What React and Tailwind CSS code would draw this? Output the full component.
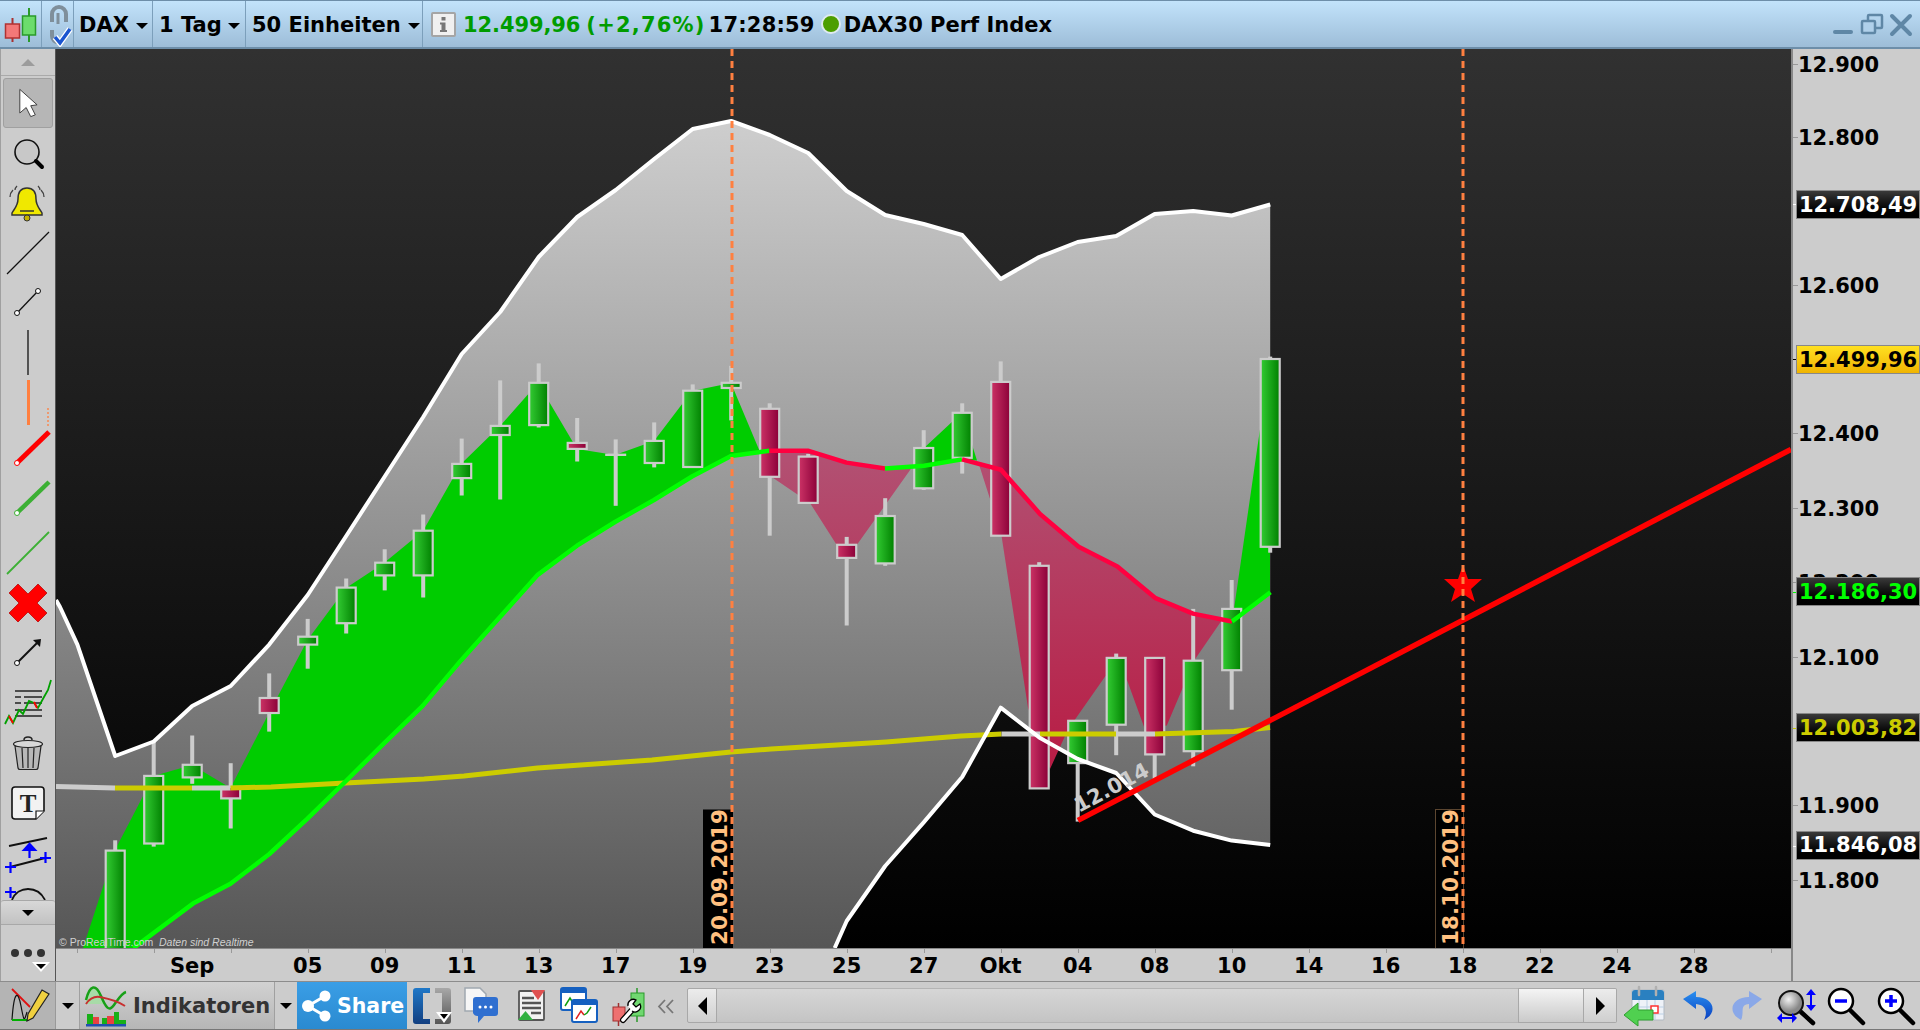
import React from "react";

const X = (i) => 115.2 + 38.5 * i;
const pts = (a) => a.map((p) => p.join(",")).join(" ");

const upperY = [756,741.5,706,686,644.6,595,536,476.5,417,354,312,257,217,190,159,129,121,135,153,191,215,224,235,279,257,242,236,214,211,215.5,204.5];
const upper = [[56,600],[60,607],[77.4,644.6],...upperY.map((y,i)=>[X(i),y])];
const lowerY = {30:845,29:840.6,28:830.7,27:814.5,26:773,25:759,24:737.4,23:707.7,22:777,21:822.4,20:866,19:921};
const lower = Object.keys(lowerY).map(Number).sort((a,b)=>a-b).map((i)=>[X(i),lowerY[i]]);
const lowerFull = [[834.7,948],...lower];

const emaGreen1 = [[133.5,948],[193,903.6],[230.5,883.8],[269.4,854],[307.5,818.6],[346,781],[384,743.4],[422.7,705.9],[461,660.4],[500,617],[538,574.6],[577,545.7],[615,522],[654,500],[692,476.5],[731,456],[769.4,450.8]];
const emaRed1 = [[769.4,450.8],[807.8,450.7],[846.5,462.6],[885,468.5]];
const emaGreen2 = [[885,468.5],[924,465.7],[962,459.4]];
const emaRed2 = [[962,459.4],[1001,469.7],[1040,514],[1078.6,546.8],[1117.4,566.6],[1155,597.8],[1193,613.6],[1232,621.5]];
const emaGreen3 = [[1232,621.5],[1270.4,592.3]];

const cloudGreen1 = [[83,948],[115,850],[153.5,776],[192,765],[230.5,788],[269,713],[307.5,640],[346,588],[384,563],[423,531],[461,464],[500,426],[538,383],[577,449],[615,455],[654,441],[692,391],[731,383],[760,452],...[...emaGreen1].reverse()];
const cloudRed1 = [[769.4,450.8],[807.8,450.7],[846.5,462.6],[885,468.5],[912.6,466.5],[856.4,545.6],[836.6,544.8],[810,503],[771,476.4]];
const cloudGreen2 = [[912.6,466.5],[924,448],[953,421],[962,413],[977,460.6],[962,459.4],[924,465.7]];
const cloudRed2 = [[979,464.6],[1001,469.7],[1040,514],[1078.6,546.8],[1117.4,566.6],[1155,597.8],[1193,613.6],[1222,620],[1194.5,660],[1166.8,725.5],[1145,729.5],[1127,680],[1105.5,676],[1068,729.5],[1050,769],[1028,707.7],[1001.5,535.7],[991,502]];
const cloudGreen3 = [[1232,621.5],[1234,609],[1270,360],[1270,592.3]];

// [index, wickTop, bodyTop, bodyBottom, wickBottom, colour]
const candles = [
  [0,840.3,850.6,960,960,"g"],[1,741.5,775.9,843.5,846.6,"g"],[2,735.5,764.8,777.4,783.8,"g"],[3,763.2,786.9,798.4,828.5,"r"],
  [4,673.4,698,713,731.6,"r"],[5,618.9,636.7,644.6,668.7,"g"],[6,578.5,587.6,623.2,633.5,"g"],[7,549.3,562.7,575.4,590.4,"g"],
  [8,514.5,530.7,575.4,597.5,"g"],[9,438.6,463.9,478.1,495.5,"g"],[10,380.4,425.9,435,499.5,"g"],[11,363.4,382.8,425.1,427.5,"g"],
  [12,418,442.9,448.9,461.5,"r"],[13,439.4,453.6,456,505.8,"d"],[14,422.4,440.9,463,467.4,"g"],[15,384.4,390.7,467,467,"g"],
  [16,365.8,382.8,388,420.4,"g"],[17,403.3,408.8,476.8,535.7,"r"],[18,453.9,456.6,502.9,502.9,"r"],[19,536.9,544.8,557.9,625.5,"r"],
  [20,498.2,516,563.4,565.8,"g"],[21,430.2,448,488.3,489.9,"g"],[22,403.3,412.8,457.8,473.6,"g"],[23,361.4,381.9,535.7,535.7,"r"],
  [24,562.2,565.8,788.4,788.4,"r"],[25,720.8,720.8,763.1,821.6,"g"],[26,653.6,657.9,724.7,755.2,"g"],[27,657.9,657.9,754.4,778.9,"r"],
  [28,608.9,660.7,751.2,766.3,"g"],[29,580,608.9,670.2,709.7,"g"],[30,356.6,359,546.8,552.7,"g"],
];

const Line = ({ p, c, w = 4 }) => (
  <polyline points={pts(p)} fill="none" stroke={c} strokeWidth={w} strokeLinejoin="round" strokeLinecap="butt" />
);

function Chart() {
  return (
    <svg width="1735" height="899" viewBox="56 49 1735 899" className="block">
      <defs>
        <linearGradient id="bg" x1="0" y1="49" x2="0" y2="948" gradientUnits="userSpaceOnUse">
          <stop offset="0" stopColor="#313131" /><stop offset="1" stopColor="#000000" />
        </linearGradient>
        <linearGradient id="band" x1="0" y1="120" x2="0" y2="948" gradientUnits="userSpaceOnUse">
          <stop offset="0" stopColor="#cecece" /><stop offset="1" stopColor="#565656" />
        </linearGradient>
        <linearGradient id="rcloud" x1="0" y1="460" x2="0" y2="770" gradientUnits="userSpaceOnUse">
          <stop offset="0" stopColor="#b25072" /><stop offset="1" stopColor="#b81c44" />
        </linearGradient>
        <linearGradient id="gbody"><stop offset="0" stopColor="#33cc33" /><stop offset="1" stopColor="#008000" /></linearGradient>
        <linearGradient id="rbody"><stop offset="0" stopColor="#cc3366" /><stop offset="1" stopColor="#8b0038" /></linearGradient>
      </defs>
      <rect x="56" y="49" width="1735" height="899" fill="url(#bg)" />
      <polygon points={pts([...upper, ...[...lowerFull].reverse(), [56, 948]])} fill="url(#band)" />
      <polygon points={pts(cloudGreen1)} fill="#00cc00" />
      <polygon points={pts(cloudGreen2)} fill="#00cc00" />
      <polygon points={pts(cloudGreen3)} fill="#00cc00" />
      <polygon points={pts(cloudRed1)} fill="url(#rcloud)" />
      <polygon points={pts(cloudRed2)} fill="url(#rcloud)" />
      {candles.map(([i, wt, bt, bb, wb, c]) => (
        <g key={i}>
          <rect x={X(i) - 2} y={wt} width="4" height={wb - wt} fill="#cccccc" />
          {c === "d" ? (
            <rect x={X(i) - 10.5} y={bt} width="21" height={bb - bt} fill="#cccccc" />
          ) : (
            <rect x={X(i) - 9.5} y={bt} width="19" height={bb - bt} fill={c === "g" ? "url(#gbody)" : "url(#rbody)"} stroke="#cccccc" strokeWidth="2.2" />
          )}
        </g>
      ))}
      <Line p={[[56,786.5],[115,788]]} c="#cccccc" w="5" />
      <Line p={[[115,788],[192,788]]} c="#cccc00" w="5" />
      <Line p={[[192,788],[230.5,788]]} c="#cccccc" w="5" />
      <Line p={[[230.5,788],[271,787],[345,783],[424,779],[464,776],[537.5,768],[652,760],[731,752],[771,749],[886,742],[961,736],[1001.5,734]]} c="#cccc00" w="5" />
      <Line p={[[1001.5,734],[1040,734]]} c="#cccccc" w="5" />
      <Line p={[[1040,734],[1116,734]]} c="#cccc00" w="5" />
      <Line p={[[1116,734],[1155,734]]} c="#cccccc" w="5" />
      <Line p={[[1155,734],[1234,731.5],[1270,727.5]]} c="#cccc00" w="5" />
      <Line p={emaGreen1} c="#00ff00" w="4.5" />
      <Line p={emaRed1} c="#ff0040" w="4.5" />
      <Line p={emaGreen2} c="#00ff00" w="4.5" />
      <Line p={emaRed2} c="#ff0040" w="4.5" />
      <Line p={emaGreen3} c="#00ff00" w="4.5" />
      <Line p={upper} c="#ffffff" />
      <Line p={lowerFull} c="#ffffff" />
      <text x="0" y="0" transform="translate(1079 813) rotate(-28)" fontSize="21" fontWeight="700" fill="#cccccc" fontFamily="'DejaVu Sans',sans-serif">12.014</text>
      <Line p={[[1078,820.4],[1791,449.4]]} c="#ff0000" w="5.5" />
      <polygon points="1463,565 1468,579 1482,579 1471,589 1475,602 1463,594 1451,602 1455,589 1444,579 1458,579" fill="#ff0000" />
      <rect x="703" y="809.5" width="30" height="139" fill="#000000" />
      <rect x="1435.5" y="809.5" width="28" height="139" fill="#000000" stroke="#5c4630" strokeWidth="1" />
      <text transform="translate(726.5 945) rotate(-90)" fontSize="21.5" fontWeight="700" fill="#ffc080" fontFamily="'DejaVu Sans',sans-serif">20.09.2019</text>
      <text transform="translate(1458 945) rotate(-90)" fontSize="21.5" fontWeight="700" fill="#ffc080" fontFamily="'DejaVu Sans',sans-serif">18.10.2019</text>
      <line x1="732" y1="49" x2="732" y2="948" stroke="#ff8040" strokeWidth="3" strokeDasharray="7 5" />
      <line x1="1463" y1="49" x2="1463" y2="948" stroke="#ff8040" strokeWidth="3" strokeDasharray="7 5" />
      <text x="59" y="946" fontSize="10.5" fill="#d0d0d0" fontFamily="'Liberation Sans',sans-serif">© ProRealTime.com</text>
      <text x="159" y="946" fontSize="10.5" fontStyle="italic" fill="#d0d0d0" fontFamily="'Liberation Sans',sans-serif">Daten sind Realtime</text>
    </svg>
  );
}

const Caret = ({ c = "border-t-black" }) => (
  <span className={`inline-block w-0 h-0 border-l-[6px] border-r-[6px] border-t-[6px] border-l-transparent border-r-transparent ${c}`} />
);

function TopBar() {
  return (
    <div className="flex h-[49px] shrink-0 items-stretch border-t border-b-2 border-[#6d8ea9] bg-gradient-to-b from-[#c2e3fb] to-[#9dbdd8] text-[21px] font-bold text-black">
      <div className="w-[42px] border-r border-[#7c9fbb]">
        <svg width="41" height="46" viewBox="0 1 41 46">
          <line x1="12.5" y1="18" x2="12.5" y2="42" stroke="#a83030" strokeWidth="2" />
          <rect x="5.5" y="24" width="14" height="14" fill="#f37878" stroke="#b03232" strokeWidth="1.5" />
          <line x1="29" y1="8" x2="29" y2="42" stroke="#2a9a2a" strokeWidth="2" />
          <rect x="22.5" y="16" width="13" height="19" fill="#6cdc6c" stroke="#2a9a2a" strokeWidth="1.5" />
        </svg>
      </div>
      <div className="w-[32px] border-r border-[#7c9fbb]">
        <svg width="31" height="46" viewBox="42 1 31 46">
          <path d="M52 22V14a7 7 0 0 1 14 0v8" fill="none" stroke="#7f8f9b" strokeWidth="4" />
          <path d="M58 24V13" stroke="#7f8f9b" strokeWidth="3" />
          <path d="M52 30v6a6 6 0 0 0 7 6" fill="none" stroke="#7f8f9b" strokeWidth="4" />
          <path d="M55 37l5 6 10-14" fill="none" stroke="#ffffff" strokeWidth="6" />
          <path d="M55 37l5 6 10-14" fill="none" stroke="#1a55d0" strokeWidth="3.5" />
        </svg>
      </div>
      <div className="flex w-[79px] items-center gap-[7px] border-r border-[#7c9fbb] pl-[5px] pt-[4px]">DAX<Caret /></div>
      <div className="flex w-[93px] items-center gap-[6px] border-r border-[#7c9fbb] pl-[6px] pt-[4px]">1 Tag<Caret /></div>
      <div className="flex w-[177px] items-center gap-[7px] border-r border-[#7c9fbb] pl-[6px] pt-[4px]">50 Einheiten<Caret /></div>
      <div className="flex flex-1 items-center pl-[8px]">
        <svg width="25" height="25" viewBox="0 0 25 25" className="mr-[7px]">
          <rect x="1" y="1" width="23" height="23" rx="1" fill="#f0f0f0" stroke="#a5a5a5" strokeWidth="2" />
          <rect x="10.5" y="5" width="4" height="3.5" fill="#777777" />
          <path d="M9 10.5h5.5V18H16v2H9v-2h1.5v-5.5H9z" fill="#777777" />
        </svg>
        <span className="pt-[4px] text-[#009c00] tracking-[-0.1px]">12.499,96</span>
        <span className="ml-[6px] pt-[4px] text-[#009c00] tracking-[1.2px]">(+2,76%)</span>
        <span className="ml-[3px] pt-[4px] tracking-[0.2px]">17:28:59</span>
        <span className="ml-[6px] h-[20px] w-[20px] rounded-full border-2 border-[#dfeaf0] bg-[#4d9e00]" />
        <span className="ml-[3px] pt-[4px]">DAX30 Perf Index</span>
        <span className="flex-1" />
        <svg width="90" height="46" viewBox="1830 1 90 46">
          <rect x="1833" y="30" width="20" height="4" rx="2" fill="#5f87a6" />
          <rect x="1868" y="15" width="14" height="13" rx="1" fill="none" stroke="#5f87a6" strokeWidth="2.5" />
          <rect x="1862" y="21" width="13" height="12" rx="1" fill="#b0d0ea" stroke="#5f87a6" strokeWidth="2.5" />
          <path d="M1892 16l18 18M1910 16l-18 18" stroke="#5f87a6" strokeWidth="4" strokeLinecap="round" />
        </svg>
      </div>
    </div>
  );
}

const Tool = ({ top, h, children }) => (
  <svg width="54" height={h} viewBox={`1 ${top} 54 ${h}`} className="block shrink-0">{children}</svg>
);

function LeftBar() {
  return (
    <div className="flex h-full w-[56px] shrink-0 flex-col border-l border-r border-l-[#a0a0a0] border-r-[#555555] bg-[#cccccc]">
      <div className="flex h-[27px] shrink-0 items-center justify-center border-b border-[#aaaaaa]">
        <span className="h-0 w-0 border-l-[7px] border-r-[7px] border-b-[7px] border-l-transparent border-r-transparent border-b-[#9c9c9c]" />
      </div>
      <div className="mx-[2px] mt-[2px] flex h-[50px] shrink-0 items-center justify-center rounded-[3px] border border-[#a0a0a0] bg-[#b6b6b6]">
        <svg width="20" height="32" viewBox="18 86 22 34">
          <path d="M20 88v26l7-6 5 10 5-2-5-10 7-1z" fill="#ffffff" stroke="#333333" strokeWidth="1" />
        </svg>
      </div>
      <div className="min-h-0 flex-1 overflow-hidden">
        <Tool top={128} h={46}>
          <circle cx="27" cy="152" r="12" fill="#c8c8c8" stroke="#111111" strokeWidth="1.6" />
          <line x1="36" y1="161" x2="42" y2="167" stroke="#000000" strokeWidth="4" strokeLinecap="round" />
        </Tool>
        <Tool top={174} h={52}>
          <g transform="translate(0 4)">
            <path d="M27 184c-7 0-9 5-9 11 0 7-4 10-6 14v2h30v-2c-2-4-6-7-6-14 0-6-2-11-9-11z" fill="#f0e800" stroke="#333333" strokeWidth="1.5" />
            <path d="M20 207h14" stroke="#333333" strokeWidth="1.5" />
            <circle cx="27" cy="214" r="3" fill="#c4b000" stroke="#333333" />
            <path d="M13 186c-2 2-3 4-3 7M17 182c-1 1-2 3-2 4M41 186c2 2 3 4 3 7M38 182c1 1 2 3 2 4" fill="none" stroke="#444444" strokeWidth="1.3" />
          </g>
        </Tool>
        <Tool top={226} h={54}>
          <line x1="7" y1="274" x2="49" y2="232" stroke="#111111" strokeWidth="1.3" />
        </Tool>
        <Tool top={280} h={42}>
          <line x1="17" y1="313" x2="38" y2="291" stroke="#111111" strokeWidth="1.3" />
          <circle cx="17" cy="313" r="2.5" fill="#ffffff" stroke="#111111" />
          <circle cx="38" cy="291" r="2.5" fill="#ffffff" stroke="#111111" />
        </Tool>
        <Tool top={322} h={56}>
          <line x1="28" y1="330" x2="28" y2="375" stroke="#111111" strokeWidth="1.3" />
        </Tool>
        <Tool top={378} h={50}>
          <line x1="28.5" y1="380" x2="28.5" y2="425" stroke="#ff7f3f" strokeWidth="3" />
          <line x1="48" y1="408" x2="48" y2="427" stroke="#ff7f3f" strokeWidth="1.3" strokeDasharray="2 2" />
        </Tool>
        <Tool top={428} h={44}>
          <line x1="17" y1="463" x2="49" y2="432" stroke="#ff0000" strokeWidth="5" />
          <circle cx="17" cy="463" r="2.5" fill="#ffffff" stroke="#ff0000" />
        </Tool>
        <Tool top={472} h={50}>
          <line x1="17" y1="513" x2="49" y2="482" stroke="#3cb034" strokeWidth="4.5" />
          <circle cx="17" cy="513" r="2.5" fill="#ffffff" stroke="#3cb034" />
        </Tool>
        <Tool top={522} h={56}>
          <line x1="7" y1="574" x2="49" y2="532" stroke="#3cb034" strokeWidth="1.8" />
        </Tool>
        <Tool top={578} h={50}>
          <path d="M9 593l9-9 10 10 10-10 9 9-10 10 10 10-9 9-10-10-10 10-9-9 10-10z" fill="#ff0000" stroke="#b00000" strokeWidth="0.7" />
        </Tool>
        <Tool top={628} h={44}>
          <line x1="17" y1="663" x2="39" y2="641" stroke="#111111" strokeWidth="2" />
          <path d="M33 640l8-1-1 8z" fill="#111111" />
          <circle cx="17" cy="663" r="2.5" fill="#ffffff" stroke="#111111" />
        </Tool>
        <Tool top={672} h={58}>
          <path d="M15 691h27M15 697h6M24 697h18M15 703h6M24 703h18M15 710h27M15 716h27" stroke="#222222" strokeWidth="1.6" />
          <polyline points="5,724 9,716 13,723 19,710 23,714 29,701 34,703 38,708 44,697 48,690 51,680" fill="none" stroke="#00a000" strokeWidth="1.8" />
          <polyline points="9,716 13,723" fill="none" stroke="#ff0000" strokeWidth="1.8" />
          <polyline points="34,702 37,708" fill="none" stroke="#ff0000" strokeWidth="1.8" />
        </Tool>
        <Tool top={730} h={48}>
          <path d="M15 746l3 22a2 2 0 0 0 2 1.500h16a2 2 0 0 0 2-1.500l3-22z" fill="#b8b8b8" stroke="#222222" strokeWidth="1.2" />
          <path d="M22 748l1 20M28 748v20M34 748l-1 20" stroke="#222222" strokeWidth="1.2" />
          <ellipse cx="28" cy="744" rx="14.500" ry="3.500" fill="#d8d8d8" stroke="#222222" strokeWidth="1.2" />
          <path d="M24 740c0-4 8-4 8 0" fill="none" stroke="#222222" strokeWidth="1.5" />
        </Tool>
        <Tool top={778} h={50}>
          <path d="M15 787h26a3 3 0 0 1 3 3v21l-8 8H15a3 3 0 0 1-3-3v-26a3 3 0 0 1 3-3z" fill="#f2f2f2" stroke="#111111" strokeWidth="1.6" />
          <path d="M36 819v-8h8" fill="#ffffff" stroke="#111111" strokeWidth="1.2" />
          <text x="28" y="812" textAnchor="middle" fontSize="25" fontWeight="700" fill="#222222" fontFamily="'Liberation Serif',serif">T</text>
        </Tool>
        <Tool top={828} h={52}>
          <line x1="9" y1="846" x2="47" y2="838" stroke="#111111" strokeWidth="2" />
          <line x1="10" y1="867" x2="45" y2="858" stroke="#111111" strokeWidth="2" />
          <path d="M5 867h11M10.500 862v11M40 858h11M45.500 852v11" stroke="#0000ff" strokeWidth="2.2" />
          <path d="M29.500 858v-12M24 850l5.500-6 5.500 6z" stroke="#0000ff" strokeWidth="2.2" fill="#0000ff" />
        </Tool>
        <Tool top={880} h={20}>
          <path d="M5 892h11M10.500 887v11" stroke="#0000ff" strokeWidth="2.200" />
          <path d="M12 900c3-8 10-11 16-11s13 3 17 11" fill="none" stroke="#111111" strokeWidth="1.800" />
        </Tool>
      </div>
      <div className="flex h-[25px] shrink-0 items-center justify-center rounded-t-[3px] border-t border-b border-[#a8a8a8] bg-gradient-to-b from-[#d8d8d8] to-[#c2c2c2]">
        <Caret />
      </div>
      <div className="h-[56px] shrink-0">
        <svg width="54" height="56" viewBox="1 925 54 56">
          <circle cx="15" cy="953" r="4" fill="#333333" /><circle cx="28" cy="953" r="4" fill="#333333" /><circle cx="41" cy="953" r="4" fill="#333333" />
          <path d="M32 962h18l-9 10z" fill="#ffffff" />
          <path d="M36 964h10l-5 5z" fill="#000000" />
        </svg>
      </div>
    </div>
  );
}

const priceLabels = [["12.900",63.7],["12.800",136.5],["12.600",285],["12.400",432.5],["12.300",507.5],["12.200",582],["12.100",657.300],["11.900",805],["11.800",880]];
const priceTicks = [...priceLabels.map((l) => [l[1], "#999999"]), [204, "#ffffff"], [359, "#000000"], [592, "#00ff00"], [728, "#cccc00"], [846, "#ffffff"]];
const priceTags = [
  ["12.708,49", 190, "text-white from-[#3a3a3a] to-[#000000]"],
  ["12.499,96", 345, "text-black from-[#ffe020] to-[#f0b400]"],
  ["12.186,30", 577, "text-[#00ff00] from-[#3a3a3a] to-[#000000]"],
  ["12.003,82", 713, "text-[#cccc00] from-[#3a3a3a] to-[#000000]"],
  ["11.846,08", 830.500, "text-white from-[#3a3a3a] to-[#000000]"],
];

function PriceAxis() {
  return (
    <div className="relative h-full w-[129px] shrink-0 overflow-hidden border-l-2 border-[#888888] bg-[#cccccc] text-[21px] font-bold leading-none text-black">
      {priceTicks.map(([y, c], i) => (
        <span key={i} className="absolute left-0 h-px w-[5px]" style={{ top: y - 49, backgroundColor: c }} />
      ))}
      {priceLabels.map(([t, y]) => (
        <span key={t} className="absolute left-[5px] -translate-y-1/2" style={{ top: y - 48 }}>{t}</span>
      ))}
      {priceTags.map(([t, y, c]) => (
        <span key={t} className={`absolute left-[3px] flex h-[29px] w-[124px] items-center justify-center border border-[#888888] bg-gradient-to-b pt-px ${c}`} style={{ top: y - 49 }}>{t}</span>
      ))}
    </div>
  );
}

const dateLabels = [["Sep",2],["05",5],["09",7],["11",9],["13",11],["17",13],["19",15],["23",17],["25",19],["27",21],["Okt",23],["04",25],["08",27],["10",29],["14",31],["16",33],["18",35],["22",37],["24",39],["28",41]];
const dateTicks = [-1,1,3,5,7,9,11,13,15,17,19,21,23,25,27,29,31,33,35,37,39,41,43];

function DateAxis() {
  return (
    <div className="relative h-[33px] shrink-0 overflow-hidden border-t border-[#888888] bg-[#cccccc] text-[21px] font-bold leading-none text-black">
      {dateTicks.map((i) => (
        <span key={i} className="absolute top-0 h-[4px] w-px bg-[#999999]" style={{ left: X(i) - 56 }} />
      ))}
      {dateLabels.map(([t, i]) => (
        <span key={t} className="absolute top-[7px] -translate-x-1/2" style={{ left: X(i) - 56 }}>{t}</span>
      ))}
    </div>
  );
}

function BottomBar() {
  return (
    <div className="flex h-[49px] shrink-0 items-stretch border-t border-b border-t-[#8c8c8c] border-b-[#777777] bg-[#cccccc]">
      <div className="w-[56px] shrink-0 border-r border-[#999999] bg-[#b4b4b4]">
        <svg width="55" height="47" viewBox="0 982 55 47">
          <path d="M12 989l18 18" stroke="#e01010" strokeWidth="1.800" />
          <path d="M12 1020c2-30 6-30 9-14s3 16 6 6" fill="none" stroke="#111111" strokeWidth="1.200" />
          <path d="M12 1020h17" stroke="#00b000" strokeWidth="2" />
          <path d="M42 990l7 4-16 24-6 3 1-7z" fill="#f0d040" stroke="#222222" strokeWidth="1.200" />
        </svg>
      </div>
      <div className="flex w-[23px] shrink-0 items-center justify-center"><Caret /></div>
      <div className="flex w-[196px] shrink-0 items-center border-l border-r border-[#a0a0a0] bg-gradient-to-b from-[#d2d2d2] to-[#b6b6b6]">
        <svg width="52" height="47" viewBox="80 982 52 47" className="shrink-0">
          <path d="M86 998c3-14 9-14 14-4l4 10h-18z" fill="#a8dba8" />
          <path d="M86 1000c4-16 10-16 15-4s8 16 13 9 8-12 12-13" fill="none" stroke="#18a018" strokeWidth="2.500" />
          <path d="M86 1004c4-6 8-8 14-7 10 2 18 4 25 9" fill="none" stroke="#c83030" strokeWidth="2" />
          <path d="M87 1014h6v10h-6zM102 1018h5v6h-5zM114 1012h5v12h-5z" fill="#18b018" />
          <path d="M93 1017h6v7h-6zM107 1016h7v8h-7z" fill="#e84040" />
          <path d="M119 1020h7v4h-7z" fill="#18b018" />
          <rect x="86" y="1024" width="40" height="2.500" fill="#2050b0" />
        </svg>
        <span className="ml-px pt-[3px] text-[21px] font-bold text-[#333333]">Indikatoren</span>
      </div>
      <div className="flex w-[22px] shrink-0 items-center justify-center"><Caret /></div>
      <div className="flex w-[110px] shrink-0 items-center bg-gradient-to-b from-[#3a9ee6] to-[#2a8ad0]">
        <svg width="38" height="47" viewBox="297 982 38 47" className="shrink-0">
          <path d="M325 996l-17 10 17 10" fill="none" stroke="#ffffff" strokeWidth="3" />
          <circle cx="308" cy="1006" r="6" fill="#ffffff" /><circle cx="325" cy="996" r="5.500" fill="#ffffff" /><circle cx="325" cy="1016" r="5.500" fill="#ffffff" />
        </svg>
        <span className="ml-[2px] pt-px text-[20.500px] font-bold text-white">Share</span>
      </div>
      <div className="w-[280px] shrink-0">
        <svg width="280" height="47" viewBox="407 982 280 47">
          <defs>
            <linearGradient id="brk" x1="0" y1="0" x2="0" y2="1"><stop offset="0" stopColor="#1f78c8" /><stop offset="1" stopColor="#123f80" /></linearGradient>
            <linearGradient id="brk2" x1="0" y1="0" x2="0" y2="1"><stop offset="0" stopColor="#a8a8a8" /><stop offset="1" stopColor="#555555" /></linearGradient>
          </defs>
          <path d="M430 988h-14a3 3 0 0 0-3 3v30a3 3 0 0 0 3 3h14v-5h-7v-26h7z" fill="url(#brk)" />
          <path d="M435 988h13a3 3 0 0 1 3 3v30a3 3 0 0 1-3 3h-13v-5h7v-26h-7z" fill="url(#brk2)" />
          <path d="M436 1012h16l-8 11z" fill="#ffffff" /><path d="M440 1014h8l-4 5z" fill="#000000" />
          <path d="M465 988h15l6 6v17h-21z" fill="#f6f6f6" stroke="#a0a8b0" strokeWidth="1.500" />
          <path d="M476 997h19a3 3 0 0 1 3 3v13a3 3 0 0 1-3 3h-11l-6 7v-7a5 5 0 0 1-5-3v-13a3 3 0 0 1 3-3z" fill="#2f6fd0" />
          <circle cx="480" cy="1007" r="1.500" fill="#fff" /><circle cx="485.500" cy="1007" r="1.500" fill="#fff" /><circle cx="491" cy="1007" r="1.500" fill="#fff" />
          <rect x="519" y="991" width="25" height="29" rx="1" fill="#f2f2f2" stroke="#555555" strokeWidth="1.800" />
          <path d="M522 998h12M522 1003h19M522 1008h19M531 1013h10" stroke="#555555" strokeWidth="2.500" />
          <path d="M531 990h14l-7 10z" fill="#e05050" /><path d="M518 1020h15l-7.500-9z" fill="#30b040" />
          <rect x="561" y="988" width="25" height="22" rx="2" fill="#ffffff" stroke="#1560c0" strokeWidth="2" />
          <rect x="561" y="988" width="25" height="5" fill="#1560c0" />
          <path d="M565 1006l5-8 3 5" fill="none" stroke="#10a010" strokeWidth="1.500" />
          <rect x="572" y="1000" width="25" height="22" rx="2" fill="#ffffff" stroke="#1560c0" strokeWidth="2" />
          <rect x="572" y="1000" width="25" height="5" fill="#1560c0" />
          <path d="M576 1019l5-8 3 4" fill="none" stroke="#e02020" strokeWidth="1.500" /><path d="M584 1015l3-2 4-6" fill="none" stroke="#10a010" strokeWidth="1.500" />
          <line x1="618.500" y1="1003" x2="618.500" y2="1026" stroke="#a03030" strokeWidth="1.500" />
          <rect x="613" y="1007" width="12" height="14" fill="#ee7070" stroke="#a03030" />
          <line x1="637" y1="988" x2="637" y2="1022" stroke="#2a9a2a" strokeWidth="1.500" />
          <rect x="631" y="993" width="13" height="23" fill="#70d870" stroke="#2a9a2a" />
          <path d="M623 1020l9-10" stroke="#000000" strokeWidth="6" strokeLinecap="round" />
          <path d="M623 1020l9-10" stroke="#ffffff" strokeWidth="3.500" strokeLinecap="round" />
          <path d="M628 1006a5.500 5.500 0 0 1 8-6l-3 4 3 3 4-3a5.500 5.500 0 0 1-8 7" fill="#ffffff" stroke="#000000" strokeWidth="1.300" />
          <path d="M665 1000l-6 6.500 6 6.500M673 1000l-6 6.500 6 6.500" fill="none" stroke="#777777" strokeWidth="1.800" />
        </svg>
      </div>
      <div className="my-[6px] flex w-[30px] shrink-0 items-center justify-center rounded-l-[2px] border border-[#a8a8a8] bg-gradient-to-b from-[#ececec] to-[#cfcfcf]">
        <span className="h-0 w-0 border-t-[9px] border-b-[9px] border-r-[9px] border-t-transparent border-b-transparent border-r-black" />
      </div>
      <div className="my-[6px] w-[801px] shrink-0 border-t border-b border-[#b4b4b4] bg-gradient-to-b from-[#d6d6d6] to-[#c4c4c4]" />
      <div className="my-[6px] w-[66px] shrink-0 border border-[#a8a8a8] bg-gradient-to-b from-[#f4f4f4] to-[#cacaca]" />
      <div className="my-[6px] flex w-[33px] shrink-0 items-center justify-center rounded-r-[2px] border-t border-b border-r border-[#a8a8a8] bg-gradient-to-b from-[#ececec] to-[#cfcfcf]">
        <span className="h-0 w-0 border-t-[9px] border-b-[9px] border-l-[9px] border-t-transparent border-b-transparent border-l-black" />
      </div>
      <svg width="304" height="47" viewBox="1616 982 304 47" className="shrink-0">
        <defs>
          <linearGradient id="und" x1="0" y1="0" x2="0" y2="1"><stop offset="0" stopColor="#2a90f0" /><stop offset="1" stopColor="#0a3fc0" /></linearGradient>
          <radialGradient id="lens" cx="0.4" cy="0.35"><stop offset="0" stopColor="#f2f2f2" /><stop offset="1" stopColor="#888888" /></radialGradient>
        </defs>
        <rect x="1631" y="990" width="32" height="30" rx="1" fill="#eef2f8" stroke="#b0b8c0" />
        <path d="M1638 1000v20M1646 1000v20M1654 1000v20M1631 1007h32M1631 1014h32" stroke="#bcd0e4" strokeWidth="1" />
        <path d="M1631 1000v-7a3 3 0 0 1 3-3h26a3 3 0 0 1 3 3v7z" fill="#2a80c0" />
        <path d="M1638 987v8M1655 987v8" stroke="#b0b0b0" strokeWidth="2.500" strokeLinecap="round" />
        <rect x="1650" y="1006" width="7" height="7" fill="#ffffff" stroke="#ff3030" strokeWidth="1.500" />
        <path d="M1623 1015l14-12v7h15v10h-15v6z" fill="#50d050" stroke="#30a030" />
        <path d="M1695 997c17 0 23 15 8 23 4-8 2-15-8-16v5l-13-10 13-8z" fill="url(#und)" />
        <path d="M1748 997c-17 0-23 15-8 23 4-8-2-15 8-16v5l13-10-13-8z" fill="#8aa8e8" />
        <path d="M1800 1012l12 11" stroke="#000000" strokeWidth="4.500" strokeLinecap="round" />
        <circle cx="1790" cy="1003" r="12" fill="url(#lens)" stroke="#111111" strokeWidth="2" />
        <path d="M1810 991v17" stroke="#0000ff" strokeWidth="2" /><path d="M1805 995l5-6 5 6zM1805 1005l5 6 5-6z" fill="#0000ff" />
        <path d="M1778 1018h16" stroke="#0000ff" strokeWidth="2" /><path d="M1781 1013l-5 5 5 5zM1791 1013l5 5-5 5z" fill="#0000ff" />
        <path d="M1850 1011l12 12" stroke="#000000" strokeWidth="4.500" strokeLinecap="round" />
        <circle cx="1840" cy="1001" r="12" fill="#ffffff" stroke="#000000" strokeWidth="2.500" />
        <path d="M1834 1001h12" stroke="#0000ff" strokeWidth="3.500" />
        <path d="M1900 1011l12 12" stroke="#000000" strokeWidth="4.500" strokeLinecap="round" />
        <circle cx="1890" cy="1001" r="12" fill="#ffffff" stroke="#000000" strokeWidth="2.500" />
        <path d="M1884 1001h12M1890 995v12" stroke="#0000ff" strokeWidth="3.500" />
      </svg>
    </div>
  );
}

export default function App() {
  return (
    <div className="flex h-[1030px] w-[1920px] flex-col overflow-hidden bg-[#cccccc] font-['DejaVu_Sans',sans-serif]">
      <TopBar />
      <div className="flex min-h-0 flex-1">
        <LeftBar />
        <div className="flex w-[1735px] shrink-0 flex-col">
          <Chart />
          <DateAxis />
        </div>
        <PriceAxis />
      </div>
      <BottomBar />
    </div>
  );
}
